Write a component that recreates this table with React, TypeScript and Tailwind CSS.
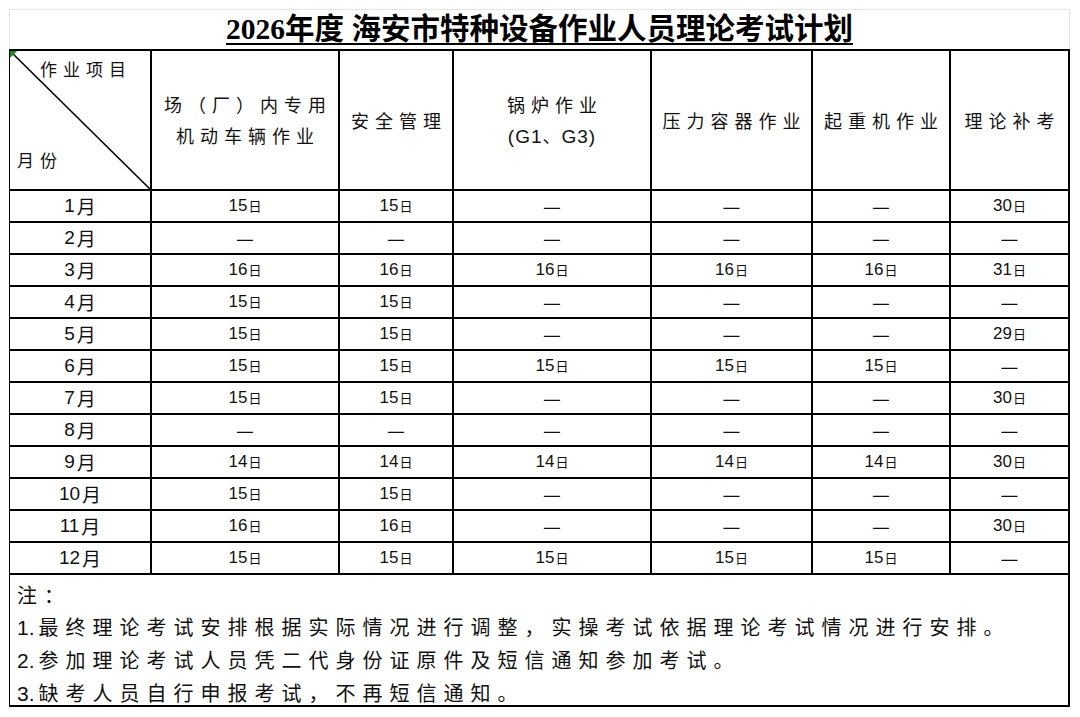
const cjk = { fontFamily: '"Noto Sans CJK SC", sans-serif' };
const narrow = { fontFamily: '"Liberation Sans Narrow", "Liberation Sans", "Noto Sans CJK SC", sans-serif' };

const rows: (number | null)[][] = [
  [15, 15, null, null, null, 30],
  [null, null, null, null, null, null],
  [16, 16, 16, 16, 16, 31],
  [15, 15, null, null, null, null],
  [15, 15, null, null, null, 29],
  [15, 15, 15, 15, 15, null],
  [15, 15, null, null, null, 30],
  [null, null, null, null, null, null],
  [14, 14, 14, 14, 14, 30],
  [15, 15, null, null, null, null],
  [16, 16, null, null, null, 30],
  [15, 15, 15, 15, 15, null],
];

const notes = [
  ["", "注："],
  ["1.", "最终理论考试安排根据实际情况进行调整，实操考试依据理论考试情况进行安排。"],
  ["2.", "参加理论考试人员凭二代身份证原件及短信通知参加考试。"],
  ["3.", "缺考人员自行申报考试，不再短信通知。"],
];

function DayCell({ value }: { value: number | null }) {
  return (
    <div className="bg-white h-[30px] flex items-center justify-center text-[#111]">
      {value === null ? (
        <span className="text-[20px] leading-none" style={cjk}>—</span>
      ) : (
        <span className="flex items-baseline">
          <span className="text-[17px]" style={narrow}>{value}</span>
          <span className="text-[13px] ml-[1px]" style={cjk}>日</span>
        </span>
      )}
    </div>
  );
}

function HeadCell({ lines }: { lines: React.ReactNode[] }) {
  return (
    <div className="bg-white h-[138px] flex flex-col items-center justify-center text-[18px] leading-[31px] tracking-[6px] text-[#111] pl-[6px]" style={cjk}>
      {lines.map((l, i) => (
        <span key={i}>{l}</span>
      ))}
    </div>
  );
}

export default function App() {
  return (
    <div className="w-[1080px] h-[717px] bg-white pt-[9px] pl-[9px]">
      <div className="w-[1061px]">
        <div className="h-[40px] border border-b-0 border-[#e4e4e4] flex items-center justify-center">
          <h1
            className="text-[29.5px] font-bold underline underline-offset-[4px] decoration-[2px] text-black leading-none"
            style={{ fontFamily: '"Liberation Serif", "Noto Sans CJK SC", serif' }}
          >
            2026年度 海安市特种设备作业人员理论考试计划
          </h1>
        </div>
        <div className="grid grid-cols-[140px_186px_112px_196px_159px_136px_117px] gap-[2px] bg-black pt-[2px] pr-[2px] pb-[2px] pl-[1px]">
          <div className="bg-white h-[138px] relative text-[17px] tracking-[6px] text-[#111]" style={cjk}>
            <svg className="absolute inset-0" width="140" height="138" viewBox="0 0 140 138">
              <line x1="0" y1="0" x2="140" y2="138" stroke="#000" strokeWidth="1.6" />
              <polygon points="0,0 7,0 0,7" fill="#1a8a1a" />
            </svg>
            <span className="absolute left-[30px] top-[5px]">作业项目</span>
            <span className="absolute left-[7px] top-[96px]">月份</span>
          </div>
          <HeadCell lines={["场（厂）内专用", "机动车辆作业"]} />
          <HeadCell lines={["安全管理"]} />
          <HeadCell
            lines={[
              "锅炉作业",
              <span className="tracking-[1px] pr-[6px]">
                <span style={narrow} className="text-[19px]">(G1</span>、<span style={narrow} className="text-[19px]">G3)</span>
              </span>,
            ]}
          />
          <HeadCell lines={["压力容器作业"]} />
          <HeadCell lines={["起重机作业"]} />
          <HeadCell lines={["理论补考"]} />
          {rows.map((r, i) => (
            <div key={i} className="contents">
              <div className="bg-white h-[30px] flex items-center justify-center text-[#111]">
                <span className="text-[19px]" style={narrow}>{i + 1}</span>
                <span className="text-[19px] ml-[2px]" style={cjk}>月</span>
              </div>
              {r.map((v, j) => (
                <DayCell key={j} value={v} />
              ))}
            </div>
          ))}
          <div className="col-span-7 bg-white h-[130px] pl-[7px] pt-[4px] text-[20px] leading-[32px] text-[#111]" style={cjk}>
            {notes.map(([num, text]) => (
              <div key={text}>
                {num && <span style={narrow} className="text-[21px] pr-[4px]">{num}</span>}
                <span className="tracking-[7px]">{text}</span>
              </div>
            ))}
          </div>
        </div>
      </div>
    </div>
  );
}
